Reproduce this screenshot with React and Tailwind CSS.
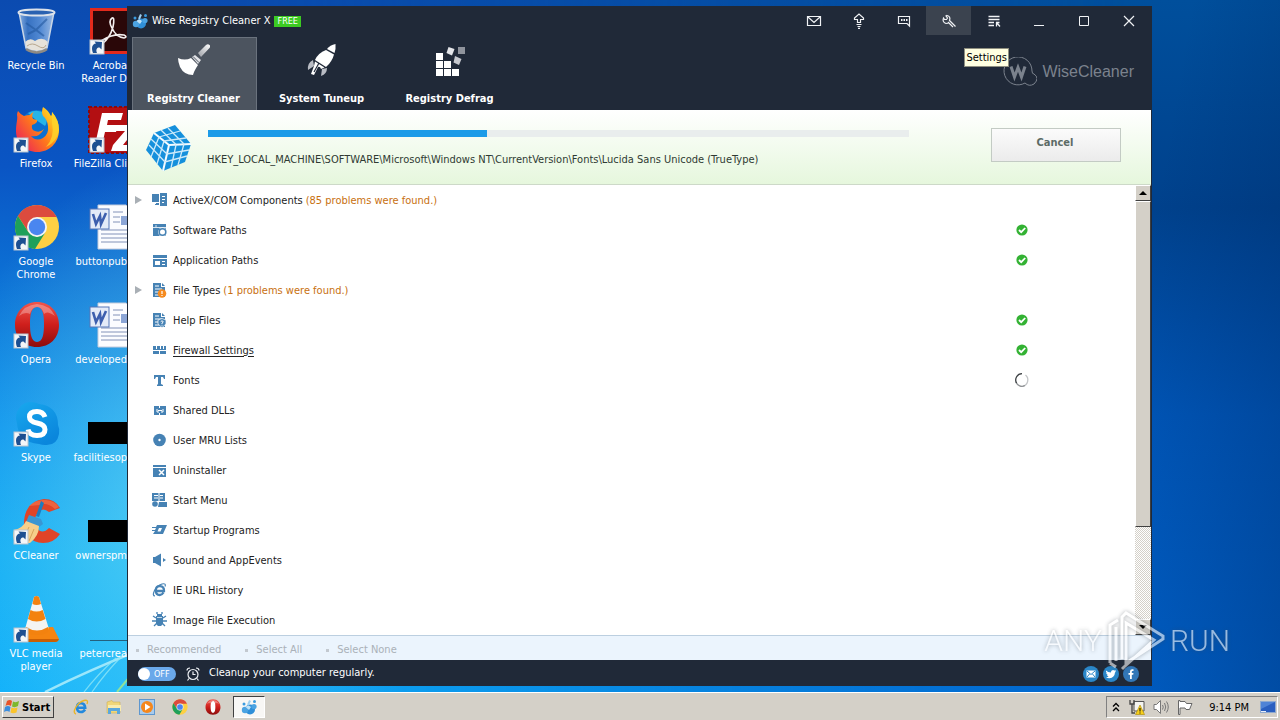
import React from 'react';

/* ---------- desktop icons (48 x 48 drawings) ---------- */

const Shortcut = () => (
  <g>
    <rect x="2" y="32" width="14" height="14" fill="#f4f6f8" stroke="#b9c4cf" strokeWidth="1" />
    <path d="M5 45C3 40 4 36 8 35.500L6.500 33.500L14 34L13.500 41.500L11.500 39.500C9 39.500 7.500 41.500 9 45Z" fill="#1d4f91" />
  </g>
);

const Icon48 = ({ children, shortcut = true }) => (
  <svg className="block h-12 w-12 shrink-0" viewBox="0 0 48 48" aria-hidden="true">
    {children}
    {shortcut && <Shortcut />}
  </svg>
);

const RecycleBin = () => (
  <Icon48 shortcut={false}>
    <defs>
      <linearGradient id="bin" x1="0" x2="1">
        <stop offset="0" stopColor="#9fc0e8" />
        <stop offset="0.250" stopColor="#3f78c4" />
        <stop offset="0.600" stopColor="#5d93d8" />
        <stop offset="1" stopColor="#b4cdec" />
      </linearGradient>
    </defs>
    <path d="M7 4L14 40Q25 48 35 40L42 4Z" fill="url(#bin)" opacity="0.850" />
    <path d="M13 34Q18 29 23 33Q30 28 36 34L35 40Q25 46 14 40Z" fill="#e6e2da" />
    <path d="M15 38Q20 34 26 38T34 37" stroke="#b7a78f" fill="none" />
    <path d="M14 15L24 22L35 11M16 26L24 22L32 28" stroke="#23589f" strokeWidth="2" fill="none" opacity="0.600" />
    <path d="M7 4L14 40Q25 47 35 40L42 4" fill="none" stroke="#c9d6e6" strokeWidth="1.500" />
    <ellipse cx="24.500" cy="4.500" rx="18" ry="3" fill="#2a62b1" stroke="#dce2ea" strokeWidth="2" />
    <path d="M14 41Q25 48 35 41" stroke="#8e8a84" strokeWidth="2.500" fill="none" />
  </Icon48>
);

const Firefox = () => (
  <Icon48>
    <defs>
      <linearGradient id="fx" x1="0.100" y1="0.700" x2="0.900" y2="0.100">
        <stop offset="0" stopColor="#f0364c" />
        <stop offset="0.450" stopColor="#ff7a1a" />
        <stop offset="1" stopColor="#ffe226" />
      </linearGradient>
    </defs>
    <circle cx="25" cy="21" r="17" fill="#0b6fd0" />
    <path d="M16 7Q25 2 34 8Q36 16 33 20L24 14Z" fill="#26b4e8" />
    <path d="M31 1Q36 4 39 10Q40 9 40 6Q47 14 47 24C47 37 37 46 25.500 46C13 46 4 37 4 25C4 17 6 13 5 9Q5 7 6 5Q9 9 12 10Q15 9 18 9Q19 7 22 6Q19 9 21 13L25 14Q26 17 20 19Q19 24 23 25Q28 27 32 23Q27 32 19 30Q24 36 31 32Q37 28 36 20Q35 13 31 10Q29 6 31 1Z" fill="url(#fx)" />
    <path d="M40 6Q47 14 47 24Q45 36 34 41Q43 31 40 17Z" fill="#ffd52b" opacity="0.800" />
  </Icon48>
);

const ChromeMark = () => (
  <g>
    <circle cx="25" cy="23" r="22" fill="#fdd043" />
    <path d="M25 23L6 12A22 22 0 0 1 44.500 13H25Z" fill="#dc4b3e" />
    <path d="M25 13H44.500A22 22 0 0 0 6 12L16.500 28Z" fill="#dc4b3e" />
    <path d="M6 12A22 22 0 0 0 23 45L33 29L25 33L16.300 28Z" fill="#1ea05a" />
    <circle cx="25" cy="23" r="10" fill="#f4f4f4" />
    <circle cx="25" cy="23" r="8.200" fill="#4a86f0" />
  </g>
);

const Chrome = () => (
  <Icon48>
    <ChromeMark />
  </Icon48>
);

const OperaMark = () => (
  <g>
    <defs>
      <linearGradient id="op" x1="0" y1="0" x2="0" y2="1">
        <stop offset="0" stopColor="#f0564c" />
        <stop offset="0.500" stopColor="#cf1f1c" />
        <stop offset="1" stopColor="#8c0c0c" />
      </linearGradient>
    </defs>
    <path fillRule="evenodd" d="M25 0C38 0 47 10 47 23S38 45 25 45S3 36 3 23S12 0 25 0ZM25 5C19 5 18 14 18 22S19 40 25 40S32 31 32 22S31 5 25 5Z" fill="url(#op)" />
    <path d="M7 14Q12 3 25 2Q38 3 43 14Q35 8 32 12Q30 5 25 5T18 12Q13 9 7 14Z" fill="#fff" opacity="0.300" />
  </g>
);

const Opera = () => (
  <Icon48>
    <OperaMark />
  </Icon48>
);

const Skype = () => (
  <Icon48>
    <defs>
      <linearGradient id="sk" x1="0" y1="0" x2="0.600" y2="1">
        <stop offset="0" stopColor="#18a8ee" />
        <stop offset="1" stopColor="#0a86dc" />
      </linearGradient>
    </defs>
    <path d="M17 2Q24 2 27 4Q46 6 46 25Q48 29 47 34Q45 46 33 45Q30 45 27 44Q6 42 5 23Q3 18 5 12Q9 3 17 2Z" fill="url(#sk)" />
    <path d="M33 17Q31 11.500 25 11.500Q17.500 11.500 17.500 17Q17.500 21.500 25 23Q33 24.500 33 29.500Q33 35.500 25 35.500Q17.500 35.500 16 29.500" fill="none" stroke="#fff" strokeWidth="5" />
  </Icon48>
);

const CCleaner = () => (
  <Icon48>
    <path d="M48 10L37 14Q31 9 26 14Q20 22 25 30Q30 37 37 30L48 36Q42 45 31 45Q12 44 12 23Q14 3 32 1Q43 1 48 10Z" fill="#e04427" />
    <path d="M17 8Q24 1 34 2Q43 3 47 9L43 11Q35 4 28 7Z" fill="#f27049" opacity="0.700" />
    <path d="M29 3L32 5L27 19L24 18Z" fill="#1d7cc0" />
    <path d="M17 17L29 21L31 26L27 29L14 24Z" fill="#3a96d2" />
    <path d="M14 23L27 28Q27 38 18 45H3Q0 38 2 32Q11 30 14 23Z" fill="#f6cf8a" />
    <path d="M17 29L11 42M22 31L17 43" stroke="#d9a35a" strokeWidth="1" />
  </Icon48>
);

const Vlc = () => (
  <Icon48>
    <path d="M10 32L41 31L47 43Q46 46 43 46H9Q6 45 7 43Z" fill="#f58410" />
    <path d="M7 43L47 43Q46 46 43 46H9Z" fill="#c85f05" />
    <path d="M22 1Q24.500 -1 27 1L37 33Q25 42 13 33Z" fill="#f4f4f2" />
    <path d="M22 1Q24.500 -1 27 1L29 8Q24.500 10 20.500 8Z" fill="#f3820f" />
    <path d="M18.500 14Q24.500 17 30.700 14L33.500 23Q24.500 28 16 23Z" fill="#f3820f" />
    <path d="M14 31Q25 38 36 31L37 33Q36 39 25 39Q14 39 13 33Z" fill="#f3820f" />
  </Icon48>
);

const Acrobat = () => (
  <Icon48>
    <rect x="2" y="0" width="46" height="46" fill="#e32a1c" />
    <rect x="5" y="3" width="43" height="40" fill="#2a0708" />
    <path d="M24 10Q20 13 24 20Q28 29 36 30Q40 29 36 27Q25 25 13 33Q10 37 14 36Q22 30 25 19Q27 9 24 10" fill="none" stroke="#f3eeee" strokeWidth="1.600" />
  </Icon48>
);

const FileZilla = () => (
  <Icon48>
    <rect x="1" y="1" width="47" height="46" fill="#b30f12" stroke="#8a0a0e" strokeWidth="2" strokeDasharray="3 2" />
    <path d="M14 7H35L33 14H20L19 19H30L28 26H17L14 39H7ZM28 19H48L46 25L35 39H48V45H23L25 39L37 25H27Z" fill="#fff" />
  </Icon48>
);

const WordDoc = () => (
  <Icon48 shortcut={false}>
    <path d="M10 1H38L46 9V45H10Z" fill="#fbfcff" stroke="#c3cbdc" />
    <path d="M25 8H35M25 13H32M25 18H32M13 26H43M13 30H43M13 34H43M13 38H43" stroke="#8292b8" strokeWidth="1" />
    <rect x="33" y="12" width="10" height="9" fill="#8ba5d6" />
    <rect x="2" y="5" width="19" height="20" fill="#e4ebf8" stroke="#5676b8" />
    <path d="M5 10L8 20L12 12L13 20L18 9" fill="none" stroke="#3d5fae" strokeWidth="2.600" />
  </Icon48>
);

const BlackThumb = () => (
  <Icon48 shortcut={false}>
    <rect x="0" y="22" width="48" height="22" fill="#000" />
  </Icon48>
);

const LineThumb = () => (
  <Icon48 shortcut={false}>
    <rect x="2" y="44" width="46" height="1" fill="#24607e" />
  </Icon48>
);

const columnOne = [
  [RecycleBin, ['Recycle Bin']],
  [Firefox, ['Firefox']],
  [Chrome, ['Google', 'Chrome']],
  [Opera, ['Opera']],
  [Skype, ['Skype']],
  [CCleaner, ['CCleaner']],
  [Vlc, ['VLC media', 'player']],
];

const columnTwo = [
  [Acrobat, ['Acroba', 'Reader D']],
  [FileZilla, ['FileZilla Cli']],
  [WordDoc, ['buttonpub']],
  [WordDoc, ['developed']],
  [BlackThumb, ['facilitiesop']],
  [BlackThumb, ['ownerspm']],
  [LineThumb, ['petercrea']],
];

/* ---------- row icons (16 x 16) ---------- */

const Icon16 = ({ children }) => (
  <svg className="block h-4 w-4 shrink-0" viewBox="0 0 16 16" fill="#4682b4" aria-hidden="true">
    {children}
  </svg>
);

const DocBase = () => (
  <g>
    <path d="M1 1H9V5H13V15H1Z" />
    <path d="M10 1L13 4H10Z" />
    <path d="M3 4H7M3 7H10M3 10H7M3 13H7" stroke="#fff" strokeWidth="1" />
  </g>
);

const rowIcons = {
  activex: (
    <Icon16>
      <path d="M0 2H7V10H0ZM4 11H7V13H3V12H4Z" />
      <path d="M8 1H15V14H8Z" />
      <path d="M10 4.500H13M10 7.500H13M10 10.500H12" stroke="#fff" />
    </Icon16>
  ),
  software: (
    <Icon16>
      <path d="M1 2H14V14H1Z" />
      <path d="M1 5.500H14M4 3V5" stroke="#fff" strokeWidth="0.800" />
      <circle cx="10.500" cy="10" r="4.500" fill="#fff" />
      <circle cx="10.500" cy="10" r="3.300" fill="none" stroke="#4682b4" strokeWidth="1.600" />
      <path d="M8 8L6 7" stroke="#4682b4" strokeWidth="1.500" />
    </Icon16>
  ),
  application: (
    <Icon16>
      <path d="M1 3H15V6H1Z" />
      <path d="M1 7H15V15H1Z" />
      <path d="M3 9H8V13H3ZM10 9H13V10H10ZM10 12H13V13H10Z" fill="#fff" />
    </Icon16>
  ),
  filetypes: (
    <Icon16>
      <DocBase />
      <circle cx="10" cy="11.500" r="4.300" fill="#f68b1f" />
      <path d="M10 9V12M10 13V14" stroke="#fff" strokeWidth="1.200" />
    </Icon16>
  ),
  help: (
    <Icon16>
      <DocBase />
      <path d="M6 8L10 6.500L14 8V12L10 15.500L6 12Z" fill="#4682b4" stroke="#fff" strokeWidth="0.700" />
      <path d="M8.700 9.700Q10 8 11.200 9.500Q11.200 10.500 10 11V12M10 12.800V13.700" stroke="#fff" fill="none" />
    </Icon16>
  ),
  firewall: (
    <Icon16>
      <path d="M1 4H4V8H1ZM5 4H8V8H5ZM9 4H11V8H9ZM12 4H14V8H12ZM1 9H7V12H1ZM8 9H14V12H8ZM1 7H14V8H1Z" />
    </Icon16>
  ),
  fonts: (
    <Icon16>
      <path d="M2 3H13V7H12L11 5H9V12L11 13V14H5V13L6 12V5H4L3 7H2Z" />
    </Icon16>
  ),
  dlls: (
    <Icon16>
      <path d="M2 4H7V6H8V4H14V13H8V11H7V13H2Z" />
      <path d="M5 7V10H7M11 7V10H9M6 8.500H10" stroke="#fff" fill="none" />
    </Icon16>
  ),
  mru: (
    <Icon16>
      <circle cx="7.500" cy="8" r="6.300" />
      <circle cx="7.500" cy="8" r="1.200" fill="#fff" />
    </Icon16>
  ),
  uninstaller: (
    <Icon16>
      <path d="M1 3H14V15H1Z" />
      <path d="M1 5.500H14" stroke="#fff" />
      <path d="M7 8L12 13M12 8L7 13" stroke="#fff" strokeWidth="1.500" />
    </Icon16>
  ),
  startmenu: (
    <Icon16>
      <path d="M0 1H13V9H0Z" />
      <path d="M2 3.500H6M2 6H6M8 3.500H11M8 6H11M7 1V9" stroke="#fff" />
      <circle cx="3" cy="12" r="2.800" />
      <path d="M7 10H15V15H6Z" />
    </Icon16>
  ),
  startup: (
    <Icon16>
      <path d="M5 3H15L11 12H1L3 9H0V8H3L4 6H0V5H4Z" />
      <path d="M7 6H10L8.500 9.500H5.500Z" fill="#fff" />
    </Icon16>
  ),
  sound: (
    <Icon16>
      <path d="M1 5H3L9 1.500V14.500L3 11H1ZM11 6L14 8L11 10Z" />
    </Icon16>
  ),
  ie: (
    <Icon16>
      <path d="M11.500 10.500Q10 13 7.800 13Q3.800 13 3.800 8.500T8 4.200T12 9H4" fill="none" stroke="#4682b4" strokeWidth="2.300" />
      <path d="M3 14Q0 14 2.500 8.500Q5 3.500 10 2Q14.500 1 13 4.500" fill="none" stroke="#4682b4" strokeWidth="1.200" />
    </Icon16>
  ),
  bug: (
    <Icon16>
      <path d="M5 2H10V4H11V12L9 14H6L4 12V4H5Z" />
      <path d="M1 4L4 6M14 4L11 6M0 9H4M15 9H11M2 14L5 11M13 14L10 11M5 0V2M10 0V2" stroke="#4682b4" strokeWidth="1.300" />
      <path d="M5 5.500H10" stroke="#fff" strokeWidth="0.700" />
    </Icon16>
  ),
};

const rows = [
  { icon: 'activex', name: 'ActiveX/COM Components', found: '(85 problems were found.)' },
  { icon: 'software', name: 'Software Paths', status: 'ok' },
  { icon: 'application', name: 'Application Paths', status: 'ok' },
  { icon: 'filetypes', name: 'File Types', found: '(1 problems were found.)' },
  { icon: 'help', name: 'Help Files', status: 'ok' },
  { icon: 'firewall', name: 'Firewall Settings', status: 'ok', hover: true },
  { icon: 'fonts', name: 'Fonts', status: 'busy' },
  { icon: 'dlls', name: 'Shared DLLs' },
  { icon: 'mru', name: 'User MRU Lists' },
  { icon: 'uninstaller', name: 'Uninstaller' },
  { icon: 'startmenu', name: 'Start Menu' },
  { icon: 'startup', name: 'Startup Programs' },
  { icon: 'sound', name: 'Sound and AppEvents' },
  { icon: 'ie', name: 'IE URL History' },
  { icon: 'bug', name: 'Image File Execution' },
];

const StatusOk = () => (
  <svg className="h-3 w-3" viewBox="0 0 12 12" role="img" aria-label="Done">
    <circle cx="6" cy="6" r="5.600" fill="#33b233" />
    <path d="M3 6L5.200 8.200L9.200 4" fill="none" stroke="#fff" strokeWidth="1.800" />
  </svg>
);

const StatusBusy = () => (
  <svg className="h-4 w-4" viewBox="0 0 16 16" fill="none" role="img" aria-label="Scanning">
    <path d="M9 14A6.300 6.300 0 0 0 11.500 3" stroke="#c4c6c8" strokeWidth="1.300" />
    <path d="M2 10A6.300 6.300 0 0 0 11 13.500" stroke="#8d9093" strokeWidth="1.300" />
    <path d="M8 1.700A6.300 6.300 0 0 0 2.500 11" stroke="#3c4043" strokeWidth="1.300" />
  </svg>
);

/* ---------- window parts ---------- */

const WiseLogo = ({ className }) => (
  <svg className={className} viewBox="0 0 16 16" aria-hidden="true">
    <circle cx="9" cy="10.500" r="5" fill="#2f8fd8" />
    <circle cx="4" cy="11" r="3.200" fill="#4ba3e2" />
    <circle cx="13" cy="7.500" r="2.600" fill="#4ba3e2" />
    <circle cx="3" cy="5" r="1.500" fill="#3a9be0" />
    <circle cx="13.500" cy="2.500" r="1.500" fill="#3a9be0" />
    <path d="M9 1.500L7 6" stroke="#9fd0f0" strokeWidth="2" fill="none" />
    <path d="M4.500 8Q7 5 10 8L8 11Z" fill="#bfe2f7" />
  </svg>
);

const Stroke16 = ({ children }) => (
  <svg className="h-4 w-4" viewBox="0 0 16 16" fill="none" stroke="#f0f2f5" strokeWidth="1.200" aria-hidden="true">
    {children}
  </svg>
);

const titleButtons = [
  ['Feedback', <Stroke16><path d="M1.500 3.500H14.500V12.500H1.500ZM2 4L8 9.500L14 4" /></Stroke16>],
  ['Upgrade', <Stroke16><path d="M6.500 9.500V6.500H3.500V5L8 1L12.500 5V6.500H9.500V9.500ZM5.500 11.500H10.500M6.500 13.500H9.500M7 15.300H9" /></Stroke16>],
  ['Comments', <Stroke16><path d="M2.500 3.500H13.500V13L11 10.500H2.500Z" /><path d="M5 7H6.500M7.500 7H9M10 7H11.500" strokeWidth="1.800" /></Stroke16>],
  ['Settings', <Stroke16><path d="M14.500 13.500L8.500 7.500Q10 3.500 6 2.500L5 3L6.500 5L5.500 6.500H3.500L2.500 5Q1 9 5 10.500Q7 10.500 7.500 9.500L12 14" /></Stroke16>],
  ['Menu', <Stroke16><path d="M2.500 3.500H13.500M2.500 6.500H13.500M2.500 9.500H8M2.500 12.500H8M10 9.500H13.500M10.500 9V13.500M11 10L14 13.500" strokeWidth="1.300" /></Stroke16>],
  ['Minimize', <Stroke16><path d="M3 12.500H13" strokeWidth="1" /></Stroke16>],
  ['Maximize', <Stroke16><path d="M3.500 3.500H12.500V12.500H3.500Z" strokeWidth="1" /></Stroke16>],
  ['Close', <Stroke16><path d="M3 3L13 13M13 3L3 13" /></Stroke16>],
];

const Broom = () => (
  <svg className="h-8 w-8" viewBox="0 0 32 32" aria-hidden="true">
    <defs>
      <linearGradient id="grip" x1="1" y1="0" x2="0" y2="1">
        <stop offset="0" stopColor="#fff" />
        <stop offset="1" stopColor="#9a9da4" />
      </linearGradient>
    </defs>
    <path d="M20 9L28 1Q30 -0.500 31.500 1Q33 2.500 31.500 4L23 13Z" fill="url(#grip)" />
    <path d="M14 13L17 11L23 16L20 20Z" fill="#e3e4e8" />
    <path d="M0 14Q7 17 13 14L20 21Q16 27 15 31Q6 31 2 23Q0 18 0 14Z" fill="#fff" />
    <path d="M15 12.500L21 18.500" stroke="#4d5560" strokeWidth="1" />
  </svg>
);

const Rocket = () => (
  <svg className="h-8 w-8" viewBox="0 0 32 32" aria-hidden="true">
    <path d="M7 16Q1 19 2 26L8 22ZM21 24Q21 30 15 32L16 25Z" fill="#b9bcc4" />
    <path d="M29.500 0Q30 5 28.500 9L21 5Q24 1 29.500 0Z" fill="#fff" />
    <path d="M20 6L28 10.500Q26 18 20 23L9 16Q12 9 20 6Z" fill="#fff" />
    <path d="M9 17.500L18.500 23.500L15 25Q14 22 12 23L8 31L5 30L8 22Z" fill="#fff" />
    <path d="M13 19L8 28" stroke="#20293a" strokeWidth="1.200" />
  </svg>
);

const Blocks = () => (
  <svg className="h-8 w-8" viewBox="0 0 32 32" aria-hidden="true">
    <path d="M2 9H9V16H2ZM2 17H9V24H2ZM2 25H9V32H2ZM10 17H17V24H10ZM10 25H17V32H10ZM18 25H25V32H18Z" fill="#fff" />
    <path d="M14.500 3L20.500 5L18 11.500L12.500 9Z" fill="#e4e5e9" />
    <path d="M21 12L27.500 15L25 21L19.500 18.500Z" fill="#c6c8ce" />
    <path d="M24 3H31V10H24Z" fill="#8f939c" />
  </svg>
);

const tabs = [
  ['Registry Cleaner', Broom],
  ['System Tuneup', Rocket],
  ['Registry Defrag', Blocks],
];

const Cube = () => (
  <svg className="h-[46px] w-[46px] shrink-0" viewBox="0 0 46 46" aria-hidden="true">
    <path d="M8 8L29 0L45 19L39 37L17 46L0 25Z" fill="#1590dc" />
    <path d="M8 8L23 20L45 19M23 20L17 46" stroke="#f4fbff" strokeWidth="2" fill="none" />
    <path d="M15 5L30 19.500M22 3L38 19M13 12L34 6M18 16L40 13M5 14L21 29L43 25M3 20L19 37L41 31M13 12L5 32M18 16L11 39M30 20L25 43M38 19L32 40" stroke="#cdeafa" strokeWidth="1.300" fill="none" />
  </svg>
);

const ScrollArrow = ({ up }) => (
  <button
    type="button"
    aria-label={up ? 'Scroll up' : 'Scroll down'}
    className="flex h-4 w-full shrink-0 items-center justify-center border border-t-white border-l-white border-r-[#404040] border-b-[#404040] bg-[#d4d0c8]"
  >
    <svg className="h-1 w-2" viewBox="0 0 8 4" aria-hidden="true">
      <path d={up ? 'M4 0L8 4H0Z' : 'M0 0H8L4 4Z'} fill="#000" />
    </svg>
  </button>
);

function DesktopColumn({ items, second }) {
  return (
    <ul className={second ? 'w-[54px] pt-2' : 'w-[73px] pt-2'}>
      {items.map(([Drawing, label], i) => (
        <li key={i} className={second ? 'flex h-[98px] flex-col gap-[3px]' : 'flex h-[98px] flex-col items-center gap-[3px] pr-px'}>
          <div className={second ? 'overflow-hidden pl-[15px]' : ''}>
            <Drawing />
          </div>
          <div className={second ? 'flex flex-col items-end' : 'text-center'}>
            {label.map((line) => (
              <p key={line} className="whitespace-nowrap leading-[13px] text-white">{line}</p>
            ))}
          </div>
        </li>
      ))}
    </ul>
  );
}

function Header() {
  return (
    <header className="shrink-0 bg-[#202938] text-white">
      <div className="flex h-[31px] items-start">
        <div className="flex h-[30px] items-center gap-1 pl-1">
          <WiseLogo className="h-4 w-4" />
          <h1>Wise Registry Cleaner X</h1>
          <span className="bg-[#3ccb22] px-[3px] text-[9px] leading-[11px]">FREE</span>
        </div>
        <div className="ml-auto flex">
          {titleButtons.map(([label, icon]) => (
            <button
              key={label}
              type="button"
              aria-label={label}
              className={
                label === 'Settings'
                  ? 'flex h-[29px] w-[45px] items-center justify-center bg-[#3b434f]'
                  : 'flex h-[29px] w-[45px] items-center justify-center'
              }
            >
              {icon}
            </button>
          ))}
        </div>
      </div>
      <div className="flex items-start pl-1">
        <nav className="flex gap-[3px]">
          {tabs.map(([label, Drawing], i) => (
            <button
              key={label}
              type="button"
              className={
                i === 0
                  ? 'flex h-[73px] w-[125px] flex-col items-center justify-between border border-b-0 border-[#6a727d] bg-[#4c545f] pt-1.5 pr-0.5 pb-[3px] font-bold'
                  : 'flex h-[73px] w-[125px] flex-col items-center justify-between border border-b-0 border-transparent pt-1.5 pr-0.5 pb-[3px] font-bold'
              }
            >
              <Drawing />
              <span className="leading-4">{label}</span>
            </button>
          ))}
        </nav>
        <div className="mt-5 mr-[17px] ml-auto flex items-center gap-[5px] text-[#7b828d]">
          <svg className="h-[30px] w-[34px]" viewBox="0 0 34 30" fill="none" stroke="currentColor" aria-hidden="true">
            <path d="M29 14A14 14 0 1 0 22 26Q26 30 31 27Q37 21 31 17Q29 17 29 14Z" />
            <path d="M8 9.500L11.500 20L15 10.500L18.500 20L22 9.500" strokeWidth="3" />
          </svg>
          <span className="font-['Liberation_Sans',sans-serif] text-[16px]">WiseCleaner</span>
        </div>
      </div>
    </header>
  );
}

function ScanPanel() {
  return (
    <section className="flex h-[75px] shrink-0 items-start border-b border-[#cdd9c8] bg-linear-to-b from-white to-[#e6f7dd] pt-[15px] pr-[30px] pl-[18px]">
      <Cube />
      <div className="min-w-0 flex-1 pt-[5px] pl-[15px]">
        <div className="pl-px">
          <div role="progressbar" aria-label="Scan progress" aria-valuenow={40} className="h-[7px] bg-[#e9eded]">
            <div className="h-full bg-[#1c9be8]" style={{ width: '39.8%' }} />
          </div>
        </div>
        <p className="mt-[15px] whitespace-nowrap leading-4 text-[#2f3a33]">
          HKEY_LOCAL_MACHINE\SOFTWARE\Microsoft\Windows NT\CurrentVersion\Fonts\Lucida Sans Unicode (TrueType)
        </p>
      </div>
      <button
        type="button"
        className="mt-[3px] ml-[82px] h-[34px] w-[130px] border border-[#c3cbc4] bg-linear-to-b from-[#fbfbfb] to-[#ebebeb] pr-0.5 pb-[3px] font-bold text-[#5c6b66]"
      >
        Cancel
      </button>
    </section>
  );
}

function Results() {
  return (
    <div className="flex min-h-0 flex-1">
      <ul className="min-w-0 flex-1 overflow-hidden">
        {rows.map((row) => (
          <li key={row.name} className="flex h-[30px] items-center text-[#222]">
            <div className="flex w-6 shrink-0 pl-[7px]">
              {row.found && (
                <button type="button" aria-label={`Expand ${row.name}`}>
                  <svg className="h-2 w-2" viewBox="0 0 8 8" aria-hidden="true">
                    <path d="M0 0L7 4L0 8Z" fill="#a9afb5" />
                  </svg>
                </button>
              )}
            </div>
            {rowIcons[row.icon]}
            <span className="flex gap-[3px] pt-0.5 pl-[5px]">
              <span className={row.hover ? 'underline underline-offset-2' : ''}>{row.name}</span>
              {row.found && <span className="text-[#c8700f]">{row.found}</span>}
            </span>
            <span className="ml-auto flex w-[226px] justify-center">
              {row.status === 'ok' && <StatusOk />}
              {row.status === 'busy' && <StatusBusy />}
            </span>
          </li>
        ))}
      </ul>
      <div className="flex w-4 shrink-0 flex-col bg-[#d4d0c8]">
        <ScrollArrow up />
        <div className="flex-1 bg-[repeating-conic-gradient(#fff_0_25%,#d4d0c8_0_50%)] bg-size-[2px_2px]">
          <div className="h-[78%] border border-t-white border-l-white border-r-[#404040] border-b-[#404040] bg-[#d4d0c8]" />
        </div>
        <ScrollArrow />
      </div>
    </div>
  );
}

function Footer() {
  return (
    <footer className="shrink-0">
      <div className="flex h-[25px] items-center gap-6 border-t border-[#bccfe0] bg-[#ebf4fd] pt-1 pl-2 text-[#aab1b8]">
        {['Recommended', 'Select All', 'Select None'].map((label) => (
          <button key={label} type="button" disabled className="flex items-center gap-2">
            <span className="h-[3px] w-[3px] bg-[#c3c9d0]" />
            {label}
          </button>
        ))}
      </div>
      <div className="flex h-[26px] items-center bg-[#202938] px-2.5 pt-px text-white">
        <label className="flex h-[14px] w-[38px] items-center rounded-full bg-[#6aa8ea]">
          <input type="checkbox" role="switch" aria-label="Scheduled cleanup" className="h-3 w-3 appearance-none rounded-full bg-white" />
          <span className="pl-1 text-[9px] leading-3">OFF</span>
        </label>
        <svg className="ml-[9px] h-4 w-4" viewBox="0 0 16 16" fill="none" stroke="#eef1f5" strokeWidth="1.200" aria-hidden="true">
          <circle cx="8" cy="8.500" r="5" />
          <path d="M8 5.500V8.500H10.500M2 4.500Q2 2 5 2M14 4.500Q14 2 11 2M4 12.500L2.500 14.500M12 12.500L13.500 14.500" />
        </svg>
        <p className="pl-2">Cleanup your computer regularly.</p>
        <div className="ml-auto flex gap-1 pr-0.5">
          <a href="#mail" aria-label="Email">
            <svg className="h-4 w-4" viewBox="0 0 16 16" aria-hidden="true">
              <circle cx="8" cy="8" r="8" fill="#2a86c8" />
              <path d="M3.500 4.500H12.500V11.500H3.500Z" fill="#fff" />
              <path d="M4 5L8 8.500L12 5M4 11L6.500 8M12 11L9.500 8" fill="none" stroke="#2a86c8" />
            </svg>
          </a>
          <a href="#twitter" aria-label="Twitter">
            <svg className="h-4 w-4" viewBox="0 0 16 16" aria-hidden="true">
              <circle cx="8" cy="8" r="8" fill="#2a86c8" />
              <path d="M3 4.500Q5 6.500 7.800 6.500Q8 4 10 4Q11 4 11.500 4.600L13 4.200L12.300 5.500L13 5.600L12 6.600Q11.500 12 6.500 12.200Q4.500 12.200 3 11.200Q5 11 5.600 10.400Q4.200 10 3.900 9H4.800Q3.200 8.300 3.200 6.800L4 7Q2.500 6 3 4.500Z" fill="#fff" />
            </svg>
          </a>
          <a href="#facebook" aria-label="Facebook">
            <svg className="h-4 w-4" viewBox="0 0 16 16" aria-hidden="true">
              <circle cx="8" cy="8" r="8" fill="#3277b8" />
              <path d="M7 13V8.700H5.500V7H7V5.500Q7 3.300 9.200 3.300H10.500V5H9.500Q8.800 5 8.800 5.700V7H10.500L10.200 8.700H8.800V13Z" fill="#fff" />
            </svg>
          </a>
        </div>
      </div>
    </footer>
  );
}

const Watermark = () => (
  <div className="pointer-events-none absolute right-[50px] bottom-[19px] flex items-center gap-1 font-['Roboto',sans-serif] text-[30px] leading-[40px] font-light text-white opacity-60 [filter:drop-shadow(0_0_2px_rgba(60,70,80,0.7))]">
    <span>ANY</span>
    <svg className="h-16 w-[60px]" viewBox="0 0 60 64" fill="none" stroke="#fff" strokeWidth="3" aria-hidden="true">
      <path d="M16 50V8L20 4L52 24L57 27V30L20 54V14L48 31L18 58L16 60M4 54V16L12 11M10 52V18M4 54L10 58" />
    </svg>
    <span>RUN</span>
  </div>
);

function Taskbar() {
  const slot = 'flex h-[22px] w-[33px] items-center justify-center';
  return (
    <div className="flex h-7 shrink-0 items-center border-t border-white bg-[#d4d0c8] px-0.5 pt-px text-black">
      <button
        type="button"
        className="flex h-[22px] w-[52px] items-center gap-0.5 border border-t-white border-l-white border-r-[#404040] border-b-[#404040] pl-px font-bold"
      >
        <svg className="h-4 w-4" viewBox="0 0 16 16" aria-hidden="true">
          <path d="M3 2Q6 0 8 2L7 7Q4 5 1.500 7Z" fill="#e8542a" />
          <path d="M9 2.500Q12 4 15 2L14 7Q11 9 8 7.500Z" fill="#7db82e" />
          <path d="M1 8Q4 6 6.500 8L5.500 13Q3 11 0 13Z" fill="#3b8ede" />
          <path d="M7.500 8.500Q10 10 13.500 8.500L12.500 13.500Q9 15 6.500 13.500Z" fill="#fbc42a" />
        </svg>
        <span className="pt-0.5">Start</span>
      </button>
      <div className="flex items-center pl-2.5">
        <button type="button" aria-label="Internet Explorer" className={slot}>
          <svg className="h-4 w-4" viewBox="0 0 16 16" aria-hidden="true">
            <path d="M12 10.500Q10.500 13 8 13Q4 13 4 8.500T8 4.200T12.200 8.800H4" fill="none" stroke="#2389dd" strokeWidth="2.600" />
            <path d="M3 15Q-0.500 14 3 8Q6 3 11 1.500Q16 0.500 14 5" fill="none" stroke="#e8b52c" strokeWidth="1.400" />
          </svg>
        </button>
        <button type="button" aria-label="Windows Explorer" className={slot}>
          <svg className="h-4 w-4" viewBox="0 0 16 16" aria-hidden="true">
            <path d="M1 3L6 1.500L7 3H14V14H1Z" fill="#f0d679" stroke="#c9a94b" strokeWidth="0.500" />
            <path d="M2 6H15V12H2Z" fill="#f9ebae" />
            <path d="M2 9H14V15H11V12H5V15H2Z" fill="#5ba7dc" />
          </svg>
        </button>
        <button type="button" aria-label="Media Player" className={slot}>
          <svg className="h-4 w-4" viewBox="0 0 16 16" aria-hidden="true">
            <rect x="0.500" y="0.500" width="15" height="15" fill="#a9cbec" stroke="#5e97cf" />
            <circle cx="8" cy="8" r="6" fill="#f5871c" />
            <path d="M6 4.500L11.500 8L6 11.500Z" fill="#fff" />
          </svg>
        </button>
        <button type="button" aria-label="Chrome" className={slot}>
          <svg className="h-4 w-4" viewBox="2 0 46 46" aria-hidden="true"><ChromeMark /></svg>
        </button>
        <button type="button" aria-label="Opera" className={slot}>
          <svg className="h-4 w-4" viewBox="2 -1 46 47" aria-hidden="true">
            <ellipse cx="25" cy="22" rx="8" ry="17" fill="#fff" />
            <OperaMark />
          </svg>
        </button>
        <button
          type="button"
          aria-label="Wise Registry Cleaner"
          className="ml-1 flex h-[22px] w-8 items-center justify-center border border-t-[#404040] border-l-[#404040] border-r-white border-b-white bg-[#f8f7f5]"
        >
          <WiseLogo className="h-4 w-4" />
        </button>
      </div>
      <div className="ml-auto flex h-[22px] items-center border border-t-[#808080] border-l-[#808080] border-r-white border-b-white pr-px pl-[5px]">
        <button type="button" aria-label="Show hidden icons">
          <svg className="h-2.5 w-2" viewBox="0 0 8 10" fill="none" stroke="#000" strokeWidth="1.300" aria-hidden="true">
            <path d="M1 4.500L4 1.500L7 4.500M1 9L4 6L7 9" />
          </svg>
        </button>
        <svg className="ml-[9px] h-4 w-4" viewBox="0 0 16 16" aria-hidden="true">
          <path d="M5 2.500H15V12H5Z" fill="#f4f4f0" stroke="#555" />
          <path d="M1 1V5H5V1M3 5V14H6" fill="none" stroke="#444" strokeWidth="1.300" />
          <path d="M11 6L15.500 15.500H6.500Z" fill="#f7cf1c" stroke="#a88600" strokeWidth="0.600" />
          <path d="M11 9V12.500M11 13.500V14.500" stroke="#000" />
        </svg>
        <svg className="ml-2 h-4 w-4" viewBox="0 0 16 16" fill="none" stroke="#777" aria-hidden="true">
          <path d="M1 5.500H3.500L7.500 1.500V14.500L3.500 10.500H1Z" fill="#fff" />
          <path d="M9.500 6Q11 8 9.500 10.500M11.500 4Q14 8 11.500 12M13.500 2.500Q17 8 13.500 13.500" />
        </svg>
        <svg className="ml-2 h-4 w-4" viewBox="0 0 16 16" fill="#fff" stroke="#666" aria-hidden="true">
          <path d="M1.500 1.500V15.500H3V9H8L9 10.500H12.500L15 4.500H9.500L8 2.500H3V1.500Z" />
        </svg>
        <time className="ml-4 pt-0.5">9:14 PM</time>
        <button type="button" aria-label="Show desktop" className="ml-[11px]">
          <svg className="h-4 w-4" viewBox="0 0 16 16" aria-hidden="true">
            <rect x="0.500" y="2.500" width="15" height="11" fill="#2a5fc0" stroke="#8ea9cf" />
            <path d="M1 3H15L1 10Z" fill="#4f83d6" />
            <path d="M1 12H6V13H1Z" fill="#e8eef8" />
          </svg>
        </button>
      </div>
    </div>
  );
}

export default function App() {
  return (
    <div className="flex h-screen min-h-[720px] flex-col font-['DejaVu_Sans_Condensed','DejaVu_Sans',sans-serif] text-[11px]">
      <main className="relative flex-1 overflow-hidden bg-[linear-gradient(100deg,transparent_85%,rgba(0,35,90,0.35)),linear-gradient(#004f9c,#00418c_30%,#0056b8_60%,#0062cc)]">
        <div className="absolute inset-0 bg-[radial-gradient(ellipse_20%_50%_at_15%_72%,rgba(130,235,245,0.6),transparent),linear-gradient(#0b4bb0,#0a55c4_24%,#0d7cdc_47%,#0b93ee_62%,#0faaf4_80%,#10b0fa)] [mask-image:linear-gradient(to_right,black_12%,transparent_88%)]" />
        <svg className="absolute bottom-0 left-0 h-[60px] w-[140px]" viewBox="0 0 140 60" fill="none" aria-hidden="true">
          <path d="M45 60Q90 38 140 18" stroke="#b9f1fb" strokeWidth="2.500" opacity="0.800" />
          <path d="M84 60Q98 42 116 26M92 60Q106 40 122 24" stroke="#8fe6f6" strokeWidth="1.200" opacity="0.800" />
          <path d="M117 60L132 42" stroke="#8fe29a" strokeWidth="2" />
        </svg>
        <div className="relative flex">
          <DesktopColumn items={columnOne} />
          <DesktopColumn items={columnTwo} second />
        </div>
        <div className="absolute top-1.5 right-32 bottom-1.5 left-[127px] flex flex-col border-x border-[#202938] bg-white">
          <Header />
          <ScanPanel />
          <Results />
          <Footer />
          <div role="tooltip" className="absolute top-[42px] right-[142px] border border-[#8f8f80] bg-[#ffffe1] px-px leading-[17px] text-black">
            Settings
          </div>
        </div>
        <Watermark />
      </main>
      <Taskbar />
    </div>
  );
}
